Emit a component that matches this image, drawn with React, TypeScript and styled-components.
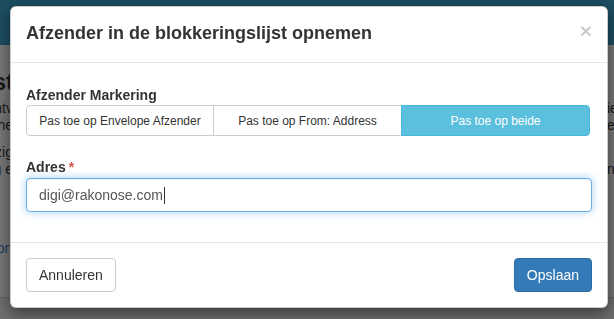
import styled, { createGlobalStyle } from "styled-components";

const GlobalStyle = createGlobalStyle`
  html, body {
    margin: 0;
    height: 100%;
    overflow: hidden;
  }
  body {
    font-family: "Liberation Sans", Arial, sans-serif;
    font-size: 14px;
    color: #333;
  }
  * {
    box-sizing: border-box;
  }
`;

/* page behind the dialog */

const Page = styled.div`
  min-height: 100vh;
  display: flex;
  flex-direction: column;
  background: #eeeeee;
`;

const Navbar = styled.header`
  height: 45px;
  background: #389bc2;
`;

const PageMain = styled.main`
  flex: 1;
  display: flex;
  flex-direction: column;
`;

const Row = styled.div<{ $gap?: number; $size?: number; $bold?: boolean; $lh?: number }>`
  display: flex;
  justify-content: space-between;
  margin-top: ${(p) => p.$gap ?? 0}px;
  font-size: ${(p) => p.$size ?? 14}px;
  font-weight: ${(p) => (p.$bold ? 700 : 400)};
  line-height: ${(p) => p.$lh ?? 17}px;
  white-space: nowrap;
`;

const LeftFrag = styled.div<{ $w?: number; $link?: boolean }>`
  width: ${(p) => p.$w ?? 13}px;
  display: flex;
  justify-content: flex-end;
  overflow: hidden;
  color: ${(p) => (p.$link ? "#337ab7" : "#333")};
`;

const RightFrag = styled.div`
  width: 7px;
  overflow: hidden;
`;

const PageFooter = styled.footer`
  height: 22px;
  background: #dcdcdc;
  border-top: 1px solid #c8c8c8;
`;

const Backdrop = styled.div`
  position: fixed;
  inset: 0;
  background: rgba(0, 0, 0, 0.5);
`;

/* dialog */

const Modal = styled.div`
  position: fixed;
  top: 6px;
  left: 10px;
  width: 598px;
  background: #fff;
  border: 1px solid rgba(0, 0, 0, 0.2);
  border-radius: 6px;
  box-shadow: 0 5px 15px rgba(0, 0, 0, 0.5);
`;

const ModalHeader = styled.div`
  display: flex;
  align-items: flex-start;
  justify-content: space-between;
  padding: 13px 15px 16px;
  border-bottom: 1px solid #e5e5e5;
`;

const Title = styled.h4`
  margin: 0;
  font-size: 18px;
  font-weight: 700;
  line-height: 26px;
  color: #333;
`;

const CloseButton = styled.button`
  margin: 0;
  padding: 0;
  border: 0;
  background: transparent;
  font-family: "Liberation Sans", Arial, sans-serif;
  font-size: 21px;
  font-weight: 700;
  line-height: 1;
  color: #000;
  opacity: 0.2;
  cursor: pointer;
`;

const ModalBody = styled.div`
  padding: 22px 15px 15px;
`;

const FormGroup = styled.div<{ $mb: number }>`
  margin-bottom: ${(p) => p.$mb}px;
`;

const Label = styled.label<{ $mb?: number }>`
  display: block;
  font-weight: 700;
  font-size: 14px;
  line-height: 20px;
  margin-bottom: ${(p) => p.$mb ?? 0}px;
  color: #333;
`;

const Required = styled.span`
  color: #d9534f;
  margin-left: 3px;
`;

const ButtonGroup = styled.div`
  display: grid;
  grid-template-columns: repeat(3, 1fr);
  width: calc(100% - 2px);
`;

const GroupButton = styled.button<{ $active?: boolean }>`
  height: 31px;
  margin: 0;
  margin-left: -1px;
  padding: 0 10px;
  font-family: "Liberation Sans", Arial, sans-serif;
  font-size: 12px;
  line-height: 18px;
  color: ${(p) => (p.$active ? "#fff" : "#333")};
  background: ${(p) => (p.$active ? "#5bc0de" : "#fff")};
  border: 1px solid ${(p) => (p.$active ? "#46b8da" : "#ccc")};
  border-radius: 0;
  white-space: nowrap;
  z-index: ${(p) => (p.$active ? 1 : 0)};

  &:first-child {
    margin-left: 0;
    border-radius: 4px 0 0 4px;
  }
  &:last-child {
    border-radius: 0 4px 4px 0;
  }
`;

const AddressField = styled.div`
  display: flex;
  align-items: center;
  height: 34px;
  padding: 0 12px;
  font-size: 14px;
  color: #555;
  background: #fff;
  border: 1px solid #66afe9;
  border-radius: 4px;
  box-shadow: inset 0 1px 1px rgba(0, 0, 0, 0.075), 0 0 8px rgba(102, 175, 233, 0.6);
`;

const Caret = styled.span`
  display: inline-block;
  width: 1px;
  height: 17px;
  margin-left: 1px;
  background: #333;
`;

const ModalFooter = styled.div`
  display: flex;
  justify-content: space-between;
  padding: 15px;
  border-top: 1px solid #e5e5e5;
`;

const Button = styled.button<{ $primary?: boolean }>`
  height: 34px;
  padding: 0 12px;
  font-family: "Liberation Sans", Arial, sans-serif;
  font-size: 14px;
  line-height: 20px;
  border-radius: 4px;
  color: ${(p) => (p.$primary ? "#fff" : "#333")};
  background: ${(p) => (p.$primary ? "#337ab7" : "#fff")};
  border: 1px solid ${(p) => (p.$primary ? "#2e6da4" : "#ccc")};
`;

export default function App() {
  return (
    <>
      <GlobalStyle />
      <Page>
        <Navbar />
        <PageMain>
          <Row $gap={23} $size={24} $bold $lh={28}>
            <LeftFrag $w={14}>Blacklist</LeftFrag>
          </Row>
          <Row $gap={4}>
            <LeftFrag>Beheer de afzenders die u ontv</LeftFrag>
            <RightFrag>iedere</RightFrag>
          </Row>
          <Row>
            <LeftFrag>Geblokkeerde berichten worden niet verwerkt, ze he</LeftFrag>
            <RightFrag>een</RightFrag>
          </Row>
          <Row $gap={10}>
            <LeftFrag>Gebruik de knoppen hieronder voor een wijzig</LeftFrag>
          </Row>
          <Row>
            <LeftFrag>of een nieuwe afzender toe te voeg e</LeftFrag>
            <RightFrag>naam</RightFrag>
          </Row>
          <Row $gap={62}>
            <LeftFrag $link>Export</LeftFrag>
          </Row>
        </PageMain>
        <PageFooter />
      </Page>
      <Backdrop />
      <Modal role="dialog">
        <ModalHeader>
          <Title>Afzender in de blokkeringslijst opnemen</Title>
          <CloseButton aria-label="Sluiten">×</CloseButton>
        </ModalHeader>
        <ModalBody>
          <FormGroup $mb={21}>
            <Label>Afzender Markering</Label>
            <ButtonGroup>
              <GroupButton>Pas toe op Envelope Afzender</GroupButton>
              <GroupButton>Pas toe op From: Address</GroupButton>
              <GroupButton $active>Pas toe op beide</GroupButton>
            </ButtonGroup>
          </FormGroup>
          <FormGroup $mb={15}>
            <Label $mb={1}>
              Adres<Required>*</Required>
            </Label>
            <AddressField>
              digi@rakonose.com
              <Caret />
            </AddressField>
          </FormGroup>
        </ModalBody>
        <ModalFooter>
          <Button>Annuleren</Button>
          <Button $primary>Opslaan</Button>
        </ModalFooter>
      </Modal>
    </>
  );
}
